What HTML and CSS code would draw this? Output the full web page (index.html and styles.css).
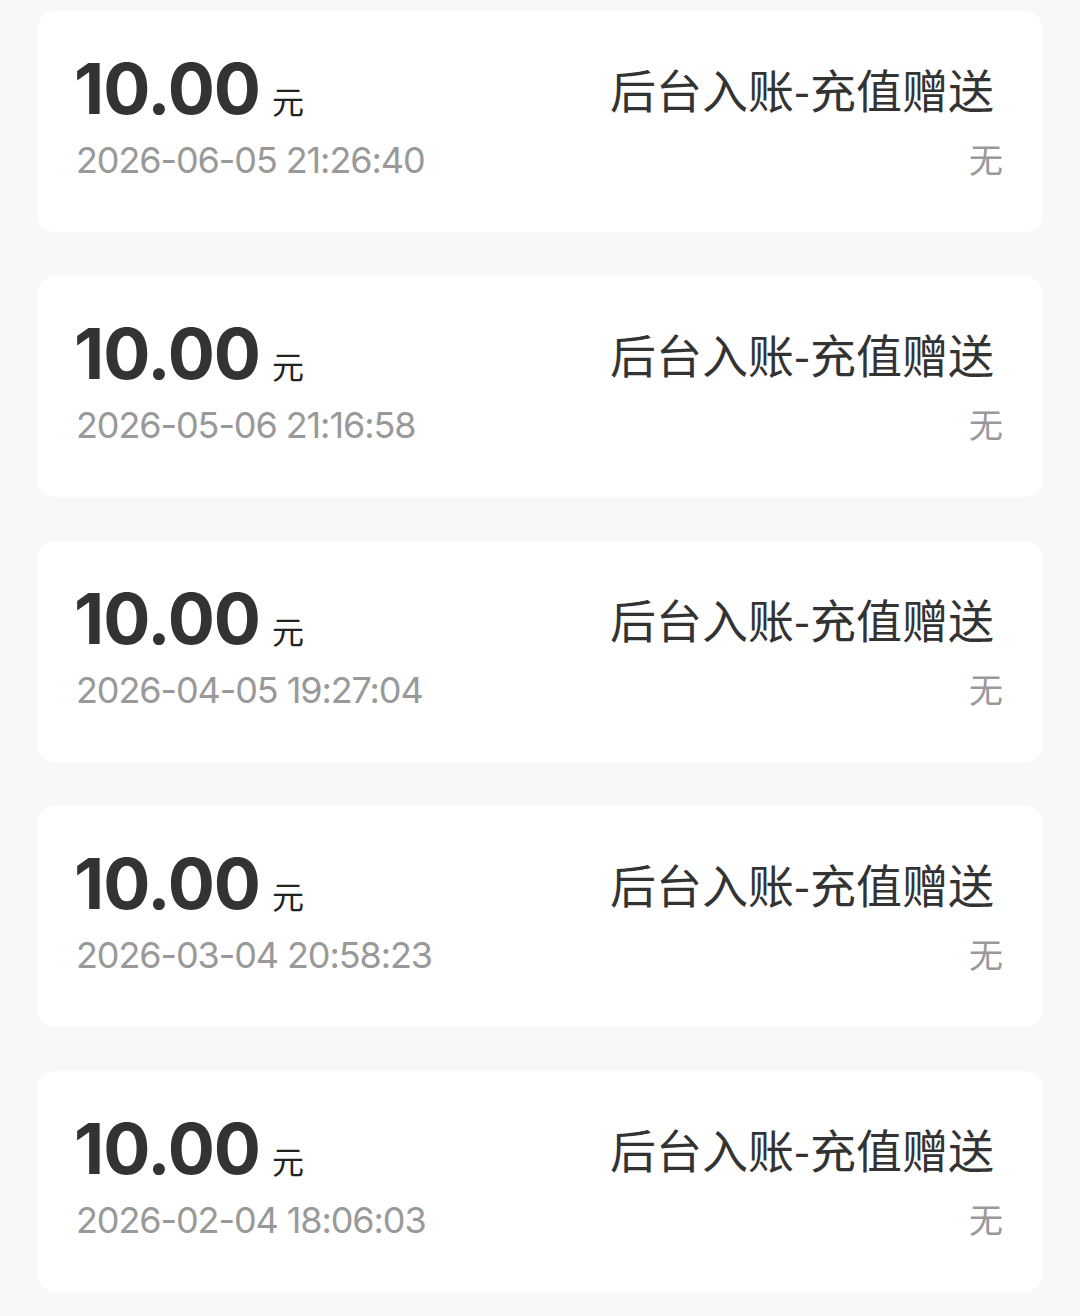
FILE: index.html
```html
<!DOCTYPE html>
<html lang="zh-CN">
<head>
<meta charset="utf-8">
<link rel="stylesheet" href="styles.css">
</head>
<body>
<div class="list">
  <div class="card">
    <div class="row top">
      <div class="amount"><span class="num">10.00</span><span class="unit">元</span></div>
      <div class="title">后台入账-充值赠送</div>
    </div>
    <div class="row bottom">
      <div class="date">2026-06-05 21:26:40</div>
      <div class="note">无</div>
    </div>
  </div>
  <div class="card">
    <div class="row top">
      <div class="amount"><span class="num">10.00</span><span class="unit">元</span></div>
      <div class="title">后台入账-充值赠送</div>
    </div>
    <div class="row bottom">
      <div class="date">2026-05-06 21:16:58</div>
      <div class="note">无</div>
    </div>
  </div>
  <div class="card">
    <div class="row top">
      <div class="amount"><span class="num">10.00</span><span class="unit">元</span></div>
      <div class="title">后台入账-充值赠送</div>
    </div>
    <div class="row bottom">
      <div class="date">2026-04-05 19:27:04</div>
      <div class="note">无</div>
    </div>
  </div>
  <div class="card">
    <div class="row top">
      <div class="amount"><span class="num">10.00</span><span class="unit">元</span></div>
      <div class="title">后台入账-充值赠送</div>
    </div>
    <div class="row bottom">
      <div class="date">2026-03-04 20:58:23</div>
      <div class="note">无</div>
    </div>
  </div>
  <div class="card">
    <div class="row top">
      <div class="amount"><span class="num">10.00</span><span class="unit">元</span></div>
      <div class="title">后台入账-充值赠送</div>
    </div>
    <div class="row bottom">
      <div class="date">2026-02-04 18:06:03</div>
      <div class="note">无</div>
    </div>
  </div>
</div>
</body>
</html>
```
FILE: styles.css
```css
html, body {
  margin: 0;
  padding: 0;
  background: #f8f8f8;
}
body {
  font-family: Inter, "Noto Sans CJK SC", sans-serif;
}
.list {
  display: flex;
  flex-direction: column;
  gap: 44px;
  padding: 11px 37px 0 37px;
}
.card {
  background: #ffffff;
  border-radius: 18px;
  height: 221px;
  box-sizing: border-box;
  padding: 40px 40px 0 40px;
  display: flex;
  flex-direction: column;
}
.row {
  display: flex;
  justify-content: space-between;
  align-items: baseline;
}
.top {
  height: 79px;
  align-items: flex-start;
}
.amount {
  display: flex;
  align-items: baseline;
  color: #333333;
  margin-left: -3px;
}
.num {
  font-size: 70px;
  font-weight: 700;
  line-height: 76px;
  letter-spacing: -1px;
}
.unit {
  font-family: "Noto Sans CJK SC", sans-serif;
  font-size: 32px;
  margin-left: 12px;
  color: #222222;
}
.title {
  font-family: "Noto Sans CJK SC", sans-serif;
  font-size: 46px;
  line-height: 46px;
  margin-top: 14px;
  color: #333333;
  margin-right: 9px;
}
.bottom {
  height: 60px;
}
.date {
  font-size: 36px;
  color: #999999;
  line-height: 60px;
  letter-spacing: -1.1px;
  margin-left: -1px;
}
.note {
  font-family: "Noto Sans CJK SC", sans-serif;
  font-size: 34px;
  color: #999999;
}
```
